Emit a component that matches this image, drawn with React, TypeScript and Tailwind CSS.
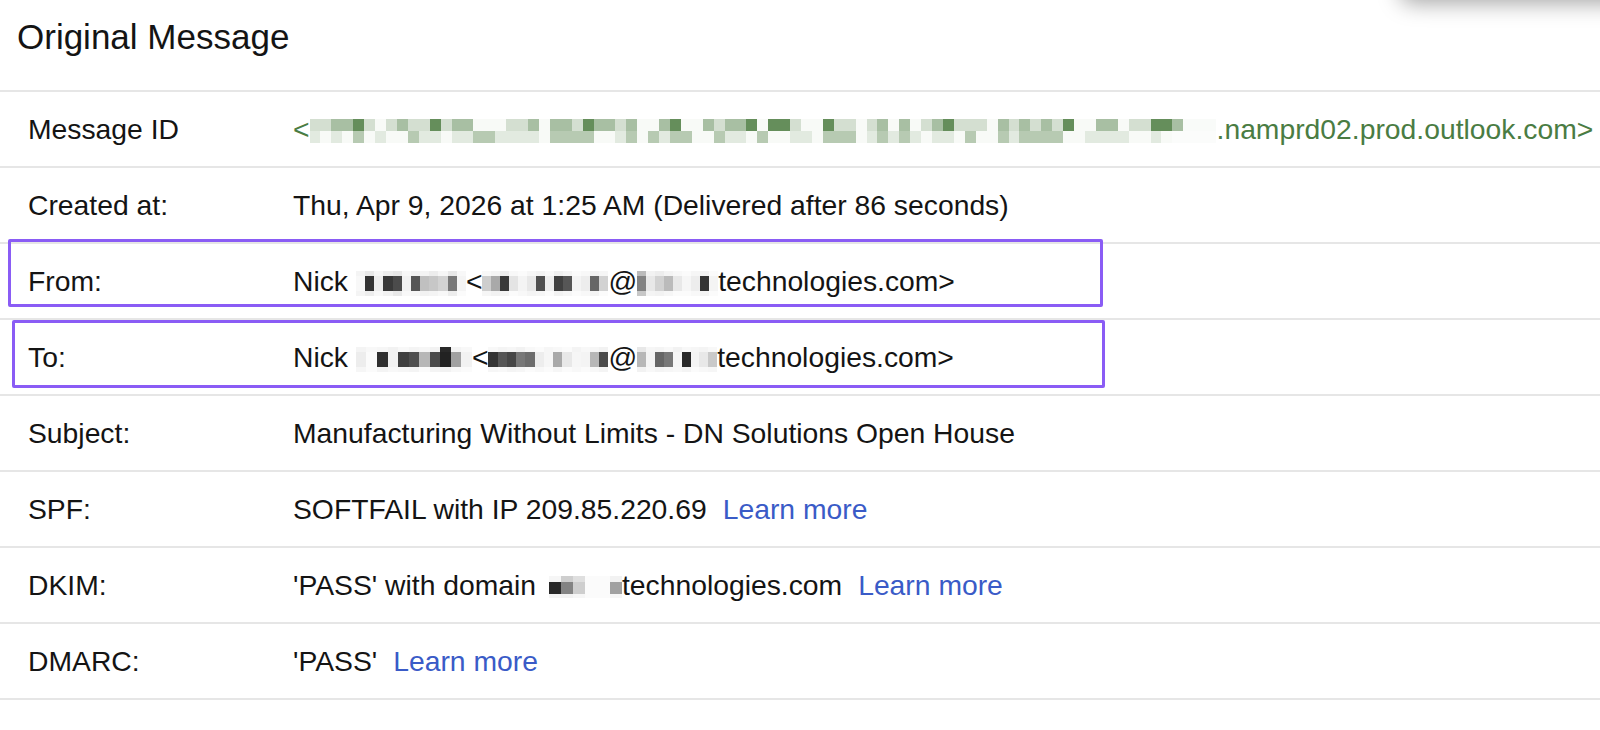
import React from 'react'

type BlurRow = { h: string; v: number[] }

const mulberry32 = (seed: number) => {
  let a = seed
  return () => {
    a |= 0
    a = (a + 0x6d2b79f5) | 0
    let t = Math.imul(a ^ (a >>> 15), 1 | a)
    t = (t + Math.imul(t ^ (t >>> 7), 61 | t)) ^ t
    return ((t ^ (t >>> 14)) >>> 0) / 4294967296
  }
}

const rnd = mulberry32(11)
const idTop = Array.from({ length: 83 }, (_, i) => {
  const v = rnd()
  if (i > 79) return 0.03
  return v < 0.3 ? 0.04 : v < 0.55 ? 0.24 : v < 0.82 ? 0.48 : 0.85
})
const idBottom = Array.from({ length: 83 }, (_, i) => {
  const v = rnd()
  if (i > 78) return 0.02
  return v < 0.35 ? 0.04 : v < 0.65 ? 0.16 : 0.4
})

const Blur: React.FC<{ w: string; rows: BlurRow[]; rgb: string }> = ({ w, rows, rgb }) => (
  <span className={`inline-flex flex-col align-middle ${w}`}>
    {rows.map((row, i) => (
      <span key={i} className={`flex ${row.h}`}>
        {row.v.map((v, j) => (
          <span key={j} className="flex-1" style={{ backgroundColor: `rgba(${rgb},${v})` }} />
        ))}
      </span>
    ))}
  </span>
)

const Learn: React.FC = () => <span className="ml-4 text-[#3a5bc7]">Learn more</span>

const Row: React.FC<{ label: string; children: React.ReactNode; box?: React.ReactNode }> = ({ label, children, box }) => (
  <div className="relative flex h-[76px] items-center border-b-2 border-[#e6e6e6] text-[28.3px]">
    <div className="w-[293px] shrink-0 pl-[28px]">{label}</div>
    <div className="whitespace-pre">{children}</div>
    {box}
  </div>
)

const gray = '30,30,30'

export default function App() {
  return (
    <div className="relative min-h-screen overflow-hidden bg-white font-['Liberation_Sans',Arial,Helvetica,sans-serif] text-[#141414]">
      <div className="absolute -top-[48px] left-[1400px] h-[48px] w-[260px] rounded-[12px] bg-white shadow-[0_3px_22px_rgba(0,0,0,0.36)]" />
      <div className="h-[90px] pl-[17px] pt-[19px] text-[35px] leading-[35px]">Original Message</div>
      <div className="border-t-2 border-[#e6e6e6]">
        <Row label="Message ID">
          <span className="text-[#4a7c43]">
            {'<'}
            <Blur
              w="w-[907px]"
              rgb="74,122,62"
              rows={[
                { h: 'h-[12px]', v: idTop },
                { h: 'h-[12px]', v: idBottom },
              ]}
            />
            .namprd02.prod.outlook.com&gt;
          </span>
        </Row>
        <Row label="Created at:">Thu, Apr 9, 2026 at 1:25 AM (Delivered after 86 seconds)</Row>
        <Row
          label="From:"
          box={<div className="absolute -top-[5px] left-[8px] h-[68px] w-[1095px] rounded-[2px] border-[3px] border-[#8a5cf5]" />}
        >
          {'Nick '}
          <Blur
            w="w-[110px]"
            rgb={gray}
            rows={[
              { h: 'h-[5px]', v: [0.05, 0.1, 0.04, 0.08, 0.1, 0.03, 0.06, 0.05, 0.08, 0.04, 0.1, 0.03] },
              { h: 'h-[15px]', v: [0.03, 0.9, 0.08, 0.88, 0.8, 0.06, 0.75, 0.28, 0.25, 0.2, 0.6, 0.05] },
              { h: 'h-[5px]', v: [0.05, 0.08, 0.03, 0.06, 0.1, 0.03, 0.04, 0.06, 0.05, 0.03, 0.08, 0.02] },
            ]}
          />
          {'<'}
          <Blur
            w="w-[126px]"
            rgb={gray}
            rows={[
              { h: 'h-[5px]', v: [0.03, 0.05, 0.08, 0.03, 0.02, 0.04, 0.06, 0.03, 0.07, 0.05, 0.02, 0.03, 0.06, 0.04] },
              { h: 'h-[15px]', v: [0.22, 0.38, 0.88, 0.12, 0.05, 0.1, 0.78, 0.08, 0.85, 0.75, 0.05, 0.08, 0.68, 0.2] },
              { h: 'h-[5px]', v: [0.04, 0.06, 0.05, 0.02, 0.03, 0.05, 0.04, 0.02, 0.06, 0.04, 0.02, 0.03, 0.05, 0.02] },
            ]}
          />
          @
          <Blur
            w="w-[81px]"
            rgb={gray}
            rows={[
              { h: 'h-[5px]', v: [0.3, 0.06, 0.08, 0.05, 0.03, 0.02, 0.04, 0.06, 0.02] },
              { h: 'h-[15px]', v: [0.55, 0.1, 0.2, 0.3, 0.1, 0.04, 0.08, 0.9, 0.05] },
              { h: 'h-[5px]', v: [0.25, 0.05, 0.06, 0.04, 0.02, 0.02, 0.03, 0.05, 0.02] },
            ]}
          />
          technologies.com&gt;
        </Row>
        <Row
          label="To:"
          box={<div className="absolute top-0 left-[12px] h-[68px] w-[1093px] rounded-[2px] border-[3px] border-[#8a5cf5]" />}
        >
          {'Nick '}
          <Blur
            w="w-[116px]"
            rgb={gray}
            rows={[
              { h: 'h-[5px]', v: [0.05, 0.03, 0.04, 0.06, 0.03, 0.05, 0.04, 0.06, 0.95, 0.05, 0.03] },
              { h: 'h-[15px]', v: [0.08, 0.02, 0.92, 0.06, 0.85, 0.78, 0.32, 0.8, 0.98, 0.42, 0.06] },
              { h: 'h-[5px]', v: [0.04, 0.02, 0.05, 0.03, 0.04, 0.05, 0.02, 0.05, 0.06, 0.03, 0.02] },
            ]}
          />
          {'<'}
          <Blur
            w="w-[120px]"
            rgb={gray}
            rows={[
              { h: 'h-[5px]', v: [0.03, 0.05, 0.04, 0.06, 0.03, 0.02, 0.04, 0.03, 0.02, 0.05, 0.03, 0.04, 0.06] },
              { h: 'h-[15px]', v: [0.9, 0.75, 0.82, 0.6, 0.65, 0.08, 0.04, 0.38, 0.1, 0.04, 0.05, 0.32, 0.8] },
              { h: 'h-[5px]', v: [0.04, 0.03, 0.05, 0.04, 0.02, 0.03, 0.02, 0.04, 0.02, 0.03, 0.02, 0.03, 0.05] },
            ]}
          />
          @
          <Blur
            w="w-[80px]"
            rgb={gray}
            rows={[
              { h: 'h-[5px]', v: [0.1, 0.04, 0.05, 0.03, 0.06, 0.03, 0.04, 0.05, 0.03] },
              { h: 'h-[15px]', v: [0.32, 0.05, 0.68, 0.6, 0.04, 0.95, 0.05, 0.1, 0.24] },
              { h: 'h-[5px]', v: [0.06, 0.03, 0.05, 0.04, 0.03, 0.05, 0.02, 0.03, 0.04] },
            ]}
          />
          technologies.com&gt;
        </Row>
        <Row label="Subject:">Manufacturing Without Limits - DN Solutions Open House</Row>
        <Row label="SPF:">
          SOFTFAIL with IP 209.85.220.69
          <Learn />
        </Row>
        <Row label="DKIM:">
          {"'PASS' with domain "}
          <span className="ml-[5px]" />
          <Blur
            w="w-[73px]"
            rgb={gray}
            rows={[
              { h: 'h-[6px]', v: [0.04, 0.22, 0.14, 0.02, 0.02, 0.06] },
              { h: 'h-[12px]', v: [0.95, 0.55, 0.22, 0.02, 0.02, 0.42] },
              { h: 'h-[4px]', v: [0.05, 0.06, 0.04, 0.02, 0.02, 0.04] },
            ]}
          />
          technologies.com
          <Learn />
        </Row>
        <Row label="DMARC:">
          'PASS'
          <Learn />
        </Row>
      </div>
    </div>
  )
}
